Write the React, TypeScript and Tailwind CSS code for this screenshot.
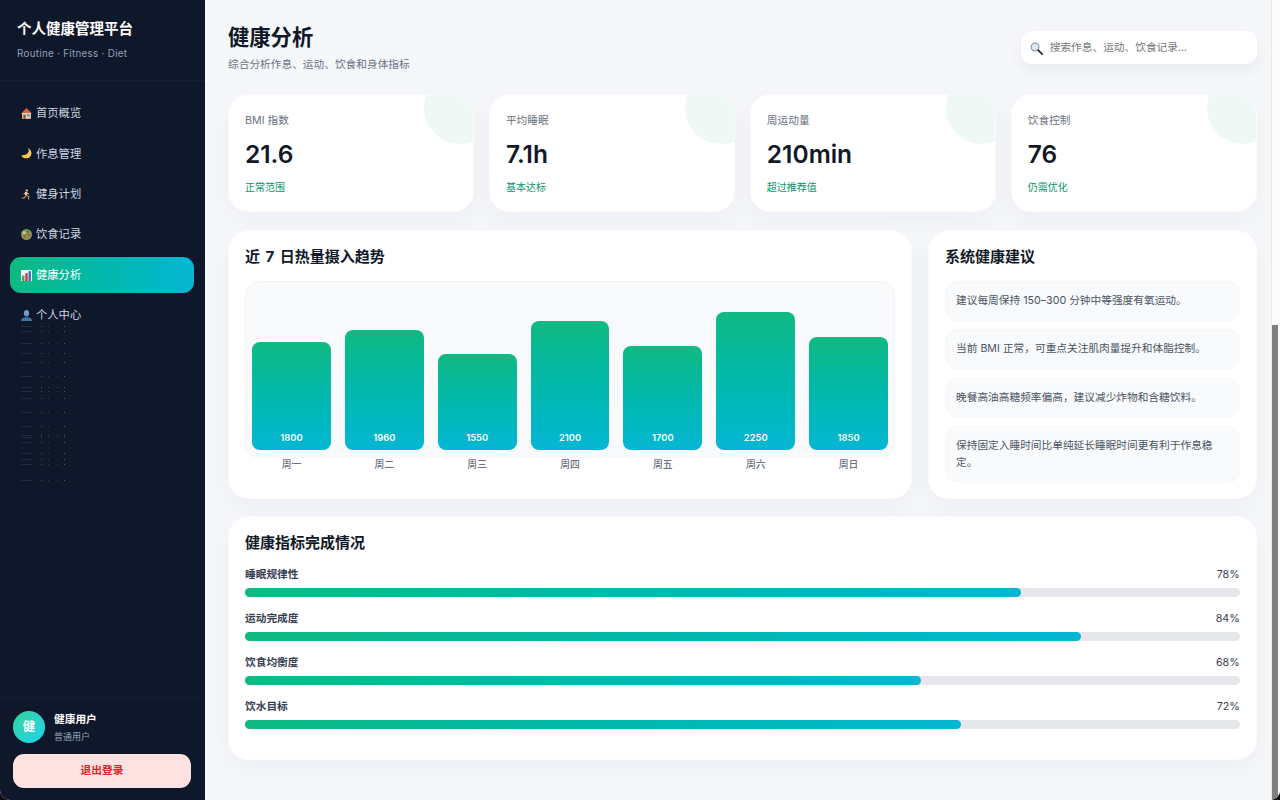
import type { ReactNode } from "react";

const stats = [
  { label: "BMI 指数", value: "21.6", note: "正常范围" },
  { label: "平均睡眠", value: "7.1h", note: "基本达标" },
  { label: "周运动量", value: "210min", note: "超过推荐值" },
  { label: "饮食控制", value: "76", note: "仍需优化" },
];

const bars = [
  { day: "周一", kcal: 1800, height: 108 },
  { day: "周二", kcal: 1960, height: 120 },
  { day: "周三", kcal: 1550, height: 96 },
  { day: "周四", kcal: 2100, height: 129 },
  { day: "周五", kcal: 1700, height: 104 },
  { day: "周六", kcal: 2250, height: 138 },
  { day: "周日", kcal: 1850, height: 113 },
];

const tips = [
  "建议每周保持 150–300 分钟中等强度有氧运动。",
  "当前 BMI 正常，可重点关注肌肉量提升和体脂控制。",
  "晚餐高油高糖频率偏高，建议减少炸物和含糖饮料。",
  "保持固定入睡时间比单纯延长睡眠时间更有利于作息稳定。",
];

const goals = [
  { label: "睡眠规律性", percent: 78 },
  { label: "运动完成度", percent: 84 },
  { label: "饮食均衡度", percent: 68 },
  { label: "饮水目标", percent: 72 },
];

function HouseIcon() {
  return (
    <svg viewBox="0 0 12 12" className="w-[11px] h-[11px] shrink-0">
      <path d="M6 0 12 6H0z" fill="#c9694a" />
      <rect x="1.2" y="5.4" width="9.6" height="6.4" fill="#e6d3ae" />
      <rect x="2.6" y="7.2" width="2.4" height="4.6" fill="#8b4a32" />
      <rect x="6.6" y="6.8" width="2.8" height="2.4" fill="#5f94c4" />
    </svg>
  );
}

function MoonIcon() {
  return (
    <svg viewBox="0 0 12 12" className="w-[11px] h-[11px] shrink-0">
      <path d="M7.6 0c2 3.6.2 8-7.4 8.2 2 3.6 7 4 9.6 1.500C12.600 6.800 11.600 2 7.600 0z" fill="#f5c84c" />
    </svg>
  );
}

function RunnerIcon() {
  return (
    <svg viewBox="0 0 12 12" className="w-[11px] h-[11px] shrink-0">
      <circle cx="6.3" cy="1.5" r="1.3" fill="#e9b27e" />
      <path d="M5.7 3.4 3 5.500" stroke="#e9b27e" strokeWidth="1.1" fill="none" />
      <path d="M6 3.200 5.300 6.800" stroke="#e8e2d2" strokeWidth="2" fill="none" />
      <path d="M6.2 4.300 8.800 5.800" stroke="#e9b27e" strokeWidth="1.1" fill="none" />
      <path d="M5.3 6.800 8.400 8.200 8.200 11.500" stroke="#c79a5a" strokeWidth="1.2" fill="none" />
      <path d="M5.2 7 3.800 9.600 1 10" stroke="#c79a5a" strokeWidth="1.2" fill="none" />
    </svg>
  );
}

function SaladIcon() {
  return (
    <svg viewBox="0 0 12 12" className="w-[11px] h-[11px] shrink-0">
      <circle cx="6" cy="6" r="6" fill="#7f9b57" />
      <circle cx="3.6" cy="4" r="1.5" fill="#c9d87a" />
      <circle cx="8.6" cy="6.6" r="1.5" fill="#d1483a" />
      <circle cx="4" cy="8.2" r="1.3" fill="#d1483a" />
      <circle cx="7.4" cy="3" r="1.1" fill="#3f6e37" />
    </svg>
  );
}

function ChartIcon() {
  return (
    <svg viewBox="0 0 12 12" className="w-[11px] h-[11px] shrink-0">
      <rect width="12" height="12" fill="#f4f6f8" />
      <rect x="1.2" y="6" width="2.6" height="6" fill="#3fa35b" />
      <rect x="4.7" y="3.5" width="2.6" height="8.5" fill="#d8352f" />
      <rect x="8.2" y="1.2" width="2.6" height="10.8" fill="#2d6fc7" />
    </svg>
  );
}

function PersonIcon() {
  return (
    <svg viewBox="0 0 12 12" className="w-[11px] h-[11px] shrink-0">
      <ellipse cx="6" cy="3.6" rx="2.8" ry="3.6" fill="#6f9cc4" />
      <path d="M0 12c0-3.200 2.800-4.200 6-4.200s6 1 6 4.200z" fill="#44749f" />
    </svg>
  );
}

function SearchIcon() {
  return (
    <svg viewBox="0 0 14 14" className="w-[13px] h-[13px] shrink-0">
      <circle cx="5.5" cy="5.5" r="4.2" fill="#dfe8ef" stroke="#8d97a0" strokeWidth="1.3" />
      <path d="M8.8 8.800 13 13" stroke="#2b2f33" strokeWidth="2" strokeLinecap="round" />
    </svg>
  );
}

const navItems: { label: string; icon: ReactNode; active?: boolean }[] = [
  { label: "首页概览", icon: <HouseIcon /> },
  { label: "作息管理", icon: <MoonIcon /> },
  { label: "健身计划", icon: <RunnerIcon /> },
  { label: "饮食记录", icon: <SaladIcon /> },
  { label: "健康分析", icon: <ChartIcon />, active: true },
  { label: "个人中心", icon: <PersonIcon /> },
];

// faint render glitches left below the last nav item in the screenshot
const glitchRows = [0, 5, 17, 27, 36, 50, 61, 65, 72, 86, 100, 109, 111, 116, 127, 133, 138, 154];

function SidebarGlitch() {
  return (
    <svg width="60" height="160" className="ml-[11px] -mt-[12px]">
      {glitchRows.map((row) => (
        <g key={row} transform={`translate(0 ${row})`}>
          <rect x="0" y="0" width="11" height="1" fill="#1a2c3c" />
          <rect x="20" y="0" width="1" height="1" fill="#4f5a6a" />
          <rect x="27" y="0" width="1" height="1" fill="#323c4c" />
          <rect x="36" y="0" width="1" height="1" fill="#323c4c" />
          <rect x="43" y="0" width="1" height="1" fill="#4f5a6a" />
        </g>
      ))}
    </svg>
  );
}

function Sidebar() {
  return (
    <aside className="w-[205px] h-full shrink-0 bg-[#0f172a] flex flex-col">
      <div className="h-[81px] shrink-0 px-[17px] pt-[19px] border-b border-[#172033]">
        <div className="text-[14.5px] leading-[20px] font-bold text-white">个人健康管理平台</div>
        <div className="mt-[7px] text-[9.8px] leading-[16px] tracking-[0.3px] text-[#94a3b8]">Routine · Fitness · Diet</div>
      </div>
      <nav className="flex-1 pl-[10px] pr-[11px] pt-[14.6px] flex flex-col gap-[4.4px]">
        {navItems.map((item) => (
          <div
            key={item.label}
            className={
              item.active
                ? "h-[36px] rounded-[11px] px-[11px] flex items-center gap-[4px] text-[11.3px] text-white bg-gradient-to-r from-[#10b981] to-[#06b6d4]"
                : "h-[36px] rounded-[11px] px-[11px] flex items-center gap-[4px] text-[11.3px] text-[#cbd5e1]"
            }
          >
            {item.icon}
            <span>{item.label}</span>
          </div>
        ))}
        <SidebarGlitch />
      </nav>
      <div className="h-[103px] shrink-0 border-t border-[#172033] px-[13px] pt-[13px]">
        <div className="flex items-center gap-[9px]">
          <div className="w-[32px] h-[32px] rounded-full bg-gradient-to-br from-[#34d399] to-[#22d3ee] flex items-center justify-center text-[12.5px] font-bold text-white">
            健
          </div>
          <div>
            <div className="text-[10.7px] leading-[15px] font-bold text-white">健康用户</div>
            <div className="mt-[3px] text-[9px] leading-[13px] text-[#94a3b8]">普通用户</div>
          </div>
        </div>
        <div className="mt-[11px] w-[178px] h-[34px] rounded-[11px] bg-[#fee2e2] flex items-center justify-center text-[10.7px] font-bold text-[#dc2626]">
          退出登录
        </div>
      </div>
    </aside>
  );
}

function Card({ title, children, className }: { title: string; children: ReactNode; className: string }) {
  return (
    <section className={`bg-white rounded-[20px] border border-[#fafbfc] shadow-[0_8px_24px_rgba(15,23,42,0.04)] ${className}`}>
      <h2 className="text-[15px] leading-[22px] font-bold text-[#111827] [word-spacing:2px]">{title}</h2>
      {children}
    </section>
  );
}

export default function App() {
  return (
    <div className="w-[1280px] h-[800px] bg-[#0b0b0b] overflow-hidden" style={{ fontFamily: 'Inter, "Noto Sans CJK SC", sans-serif' }}>
      <div className="w-full h-full flex rounded-b-[10px] overflow-hidden bg-[#f5f7fb]">
        <Sidebar />
        <main className="flex-1 min-w-0 flex">
          <div className="flex-1 min-w-0 pl-[23px] pr-[14.3px] pt-[22px]">
            <header className="h-[72px] flex justify-between items-start">
              <div>
                <h1 className="text-[21.3px] leading-[30px] font-bold text-[#111827]">健康分析</h1>
                <p className="mt-[5px] text-[10.7px] leading-[16px] text-[#6b7280]">综合分析作息、运动、饮食和身体指标</p>
              </div>
              <div className="mt-[9px] w-[236px] h-[33px] rounded-[11px] bg-white shadow-[0_6px_16px_rgba(15,23,42,0.06)] px-[9px] pt-[1px] flex items-center gap-[7px] text-[10.7px] text-[#757575]">
                <SearchIcon />
                <span>搜索作息、运动、饮食记录...</span>
              </div>
            </header>

            <div className="grid grid-cols-4 gap-[15px]">
              {stats.map((stat) => (
                <div key={stat.label} className="relative h-[118px] overflow-hidden rounded-[20px] border border-[#fafbfc] bg-white px-[16px] pt-[18px] shadow-[0_8px_24px_rgba(15,23,42,0.04)]">
                  <div className="absolute -top-[23px] -right-[23px] w-[72px] h-[72px] rounded-full bg-[#eff8f5]" />
                  <div className="text-[10.7px] leading-[16px] text-[#6b7280]">{stat.label}</div>
                  <div className="mt-[9px] text-[24.5px] leading-[32px] font-semibold text-[#111827]">{stat.value}</div>
                  <div className="mt-[10px] text-[10px] leading-[15px] text-[#059669]">{stat.note}</div>
                </div>
              ))}
            </div>

            <div className="mt-[18px] grid grid-cols-[684px_1fr] gap-[16px]">
              <Card title="近 7 日热量摄入趋势" className="h-[269px] px-[16px] pt-[15px]">
                <div className="mt-[13px] h-[177px] rounded-[14px] bg-[#f9fafb] border border-[#f3f4f6] px-[6px] pb-[7px] flex items-end gap-[14px]">
                  {bars.map((bar) => (
                    <div key={bar.day} className="relative flex-1">
                      <div
                        className="rounded-[8px] bg-gradient-to-b from-[#10b981] to-[#06b6d4] flex items-end justify-center pb-[5px] text-[9.4px] leading-[14px] font-semibold text-white"
                        style={{ height: bar.height }}
                      >
                        {bar.kcal}
                      </div>
                      <div className="absolute top-full inset-x-0 mt-[8px] text-center text-[9.8px] leading-[14px] font-medium text-[#6b7280]">{bar.day}</div>
                    </div>
                  ))}
                </div>
              </Card>

              <Card title="系统健康建议" className="h-[269px] px-[16px] pt-[15px]">
                <div className="mt-[13px] flex flex-col gap-[8.8px]">
                  {tips.map((tip) => (
                    <div key={tip} className="rounded-[12px] bg-[#f9fafb] border border-[#f6f7f9] px-[10px] py-[10px] text-[10.7px] leading-[17.5px] text-[#4b5563]">
                      {tip}
                    </div>
                  ))}
                </div>
              </Card>
            </div>

            <Card title="健康指标完成情况" className="mt-[17px] h-[244px] px-[16px] pt-[15px]">
              <div className="mt-[13px] flex flex-col gap-[14px]">
                {goals.map((goal) => (
                  <div key={goal.label}>
                    <div className="flex justify-between text-[10.7px] leading-[16px] mb-[5px]">
                      <span className="font-semibold text-[#374151]">{goal.label}</span>
                      <span className="text-[#374151]">{goal.percent}%</span>
                    </div>
                    <div className="h-[9px] rounded-full bg-[#e5e7eb]">
                      <div className="h-full rounded-full bg-gradient-to-r from-[#10b981] to-[#06b6d4]" style={{ width: `${goal.percent}%` }} />
                    </div>
                  </div>
                ))}
              </div>
            </Card>
          </div>

          <div className="w-[9px] shrink-0 flex flex-col border-l border-[#e8e8e8] bg-[#fbfbfb]">
            <div className="mt-[325px] flex-1 w-[6px] bg-[#7f7f7f]" />
          </div>
        </main>
      </div>
    </div>
  );
}
